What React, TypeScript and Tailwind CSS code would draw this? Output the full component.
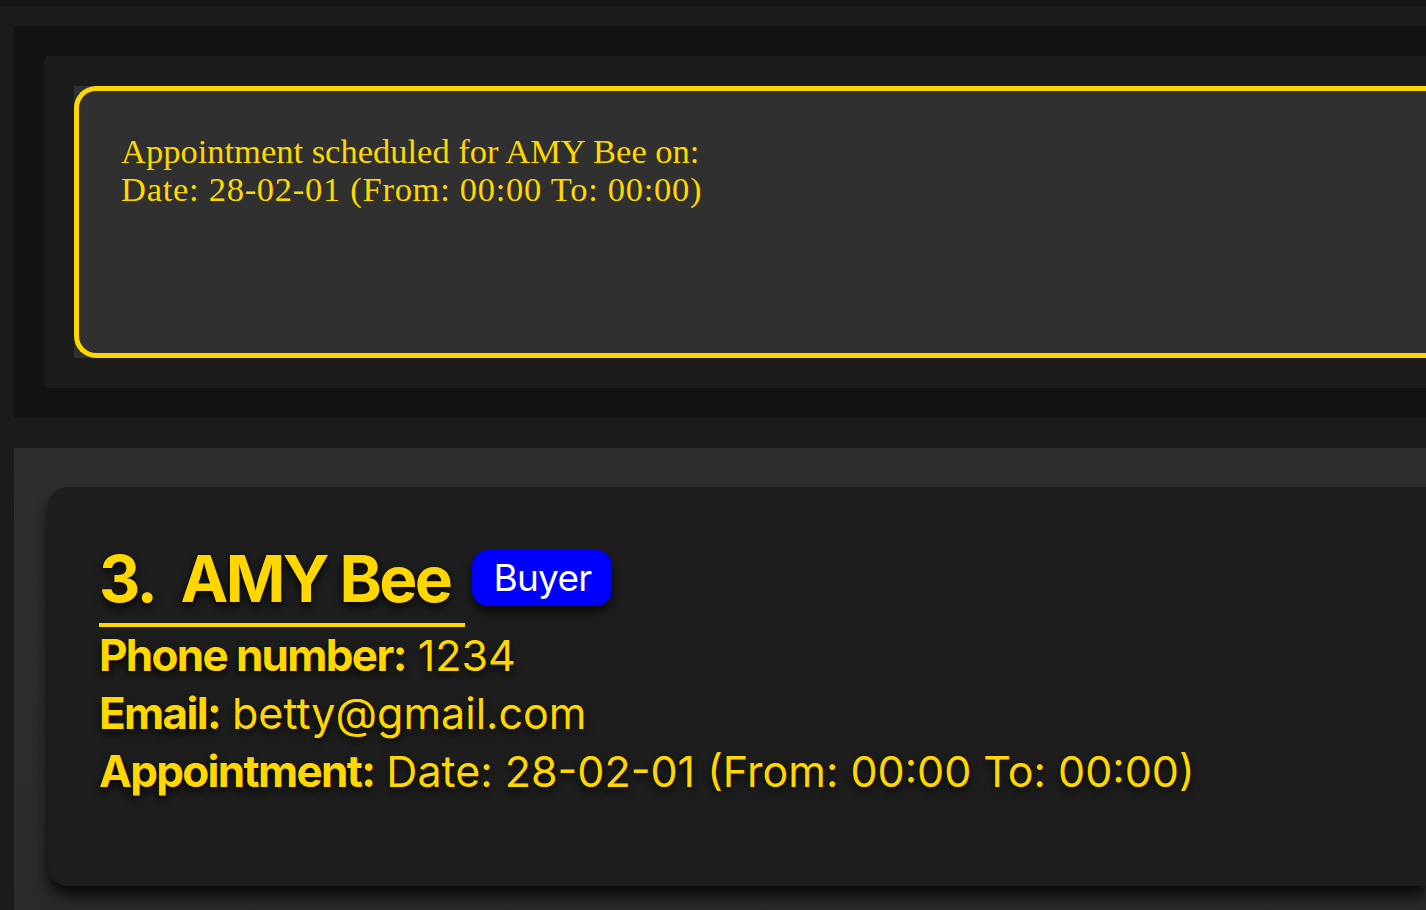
export default function App() {
  return (
    <div className="w-[1426px] h-[910px] overflow-hidden bg-[#1b1b1b]">
      <div className="h-[6px] bg-[#141414]" />
      <div className="pl-[14px] pt-[20px]">
        {/* result display */}
        <div className="bg-[#131313] p-[30px] pr-0">
          <div className="bg-[#1c1c1c] rounded-l-[5px] py-[30px] pl-[30px]">
            <div className="bg-[#303030] h-[272px]">
              <div className="h-full rounded-l-[22px] border-[5px] border-r-0 border-[#ffd700] bg-[#303030] pl-[42px] pt-[41px] font-['Liberation_Serif',serif] text-[34.5px] leading-[38px] text-[#ffd700]">
                <div>Appointment scheduled for AMY Bee on:</div>
                <div className="tracking-[0.021em]">Date: 28-02-01 (From: 00:00 To: 00:00)</div>
              </div>
            </div>
          </div>
        </div>

        {/* list */}
        <div className="mt-[30px] h-[470px] bg-gradient-to-b from-[#2e2e2e] to-[#2a2a2a] pl-[34px] pt-[39px]">
          <div className="h-[399px] rounded-l-[20px] bg-[#1e1e1e] shadow-[0_10px_14px_rgba(0,0,0,0.75)] pl-[51px] pt-[62px] font-['Inter',sans-serif] text-[#ffd700] [text-shadow:0_4px_10px_rgba(0,0,0,0.9)]">
            <div className="flex items-start gap-[7px]">
              <div className="inline-block border-b-[4px] border-[#ffd700] pb-[14px] pr-[15px] text-[64px] font-bold leading-[60px] tracking-[-0.04em]">
                3.&nbsp; AMY Bee
              </div>
              <div className="mt-[1px] rounded-[16px] bg-[#0000ff] px-[21px] h-[56px] flex items-center text-[37px] text-white tracking-[-0.02em] shadow-[0_6px_12px_rgba(0,0,0,0.7)] [text-shadow:none]">
                Buyer
              </div>
            </div>
            <div className="-mt-[1px] text-[43px] leading-[58px]">
              <div>
                <span className="text-[44px] font-bold tracking-[-0.038em]">Phone number:</span> 1234
              </div>
              <div>
                <span className="text-[44px] font-bold tracking-[-0.038em]">Email:</span> betty@gmail.com
              </div>
              <div>
                <span className="text-[44px] font-bold tracking-[-0.038em]">Appointment:</span> Date: 28-02-01 (From: 00:00 To: 00:00)
              </div>
            </div>
          </div>
        </div>
      </div>
    </div>
  )
}
